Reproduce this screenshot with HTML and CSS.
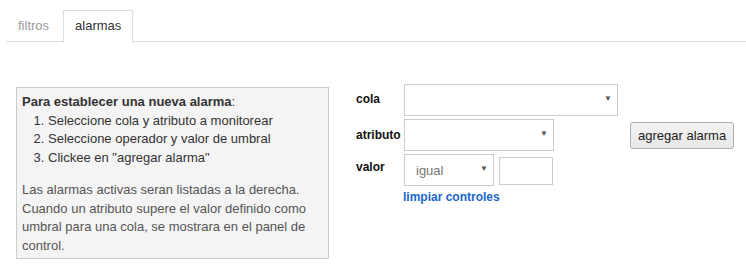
FILE: index.html
```html
<!DOCTYPE html>
<html lang="es">
<head>
    <meta charset="UTF-8">
    <title>alarmas</title>
    <link rel="stylesheet" href="styles.css">
</head>
<body>
    <div class="page">
        <ul class="tabs">
            <li class="tab">filtros</li>
            <li class="tab active">alarmas</li>
        </ul>

        <div class="content">
            <div class="help">
                <strong>Para establecer una nueva alarma</strong>:
                <ol>
                    <li>Seleccione cola y atributo a monitorear</li>
                    <li>Seleccione operador y valor de umbral</li>
                    <li>Clickee en "agregar alarma"</li>
                </ol>
                <p>Las alarmas activas seran listadas a la derecha. Cuando un atributo supere el valor definido como umbral para una cola, se mostrara en el panel de control.</p>
            </div>

            <div class="form">
                <label class="lbl lbl-cola">cola</label>
                <div class="select select-cola"><span></span><i class="arrow">▼</i></div>

                <label class="lbl lbl-attr">atributo</label>
                <div class="select select-attr"><span></span><i class="arrow">▼</i></div>
                <button class="btn">agregar alarma</button>

                <label class="lbl lbl-valor">valor</label>
                <div class="valor-row">
                    <div class="select select-op"><span>igual</span><i class="arrow">▼</i></div>
                    <input class="input" type="text">
                </div>

                <a class="link" href="#">limpiar controles</a>
            </div>
        </div>
    </div>
</body>
</html>
```

FILE: styles.css
```css
* {
    margin: 0;
    padding: 0;
    box-sizing: border-box;
}

body {
    font-family: "Liberation Sans", Arial, sans-serif;
    font-size: 13px;
    color: #333;
    background: #fff;
}

.page {
    padding: 10px 0 0 6px;
}

.tabs {
    list-style: none;
    display: flex;
    border-bottom: 1px solid #ddd;
    height: 32px;
}

.tab {
    height: 32px;
    padding: 0 11px;
    line-height: 30px;
    color: #999;
    border: 1px solid transparent;
    border-bottom: none;
    margin-right: 2px;
}

.tab.active {
    color: #333;
    background: #fff;
    border-color: #ddd;
}

.content {
    display: flex;
    align-items: flex-start;
    margin-top: 42px;
    padding-left: 10px;
}

.help {
    width: 313px;
    margin-top: 3px;
    background: #f4f4f4;
    border: 1px solid #ccc;
    padding: 5px 5px 3px 5px;
    line-height: 18.5px;
    color: #333;
}

.help strong {
    font-weight: bold;
}

.help ol {
    padding-left: 26px;
    margin-bottom: 14px;
}

.help p {
    color: #555;
}

.form {
    display: grid;
    grid-template-columns: 48px 214px auto;
    row-gap: 3px;
    margin-left: 27px;
    align-items: center;
}

.lbl {
    font-size: 12px;
    font-weight: bold;
    color: #111;
    white-space: nowrap;
    grid-column: 1;
}

.lbl-cola { grid-row: 1; }
.lbl-attr { grid-row: 2; }
.lbl-valor { grid-row: 3; }

.lbl-cola {
    align-self: start;
    padding-top: 8px;
}

.lbl-valor {
    align-self: start;
    padding-top: 6px;
}

.select {
    position: relative;
    height: 32px;
    border: 1px solid #ccc;
    background: #fff;
    display: flex;
    align-items: center;
    padding-left: 11px;
    color: #777;
}

.select-cola {
    grid-column: 2;
    grid-row: 1;
    width: 214px;
}

.select-attr {
    grid-column: 2;
    grid-row: 2;
    width: 150px;
}

.select-op {
    width: 90px;
}

.arrow {
    position: absolute;
    right: 5px;
    top: 9px;
    font-style: normal;
    font-size: 8px;
    color: #555;
}

.btn {
    grid-column: 3;
    grid-row: 2;
    margin-left: 12px;
    height: 27px;
    padding: 0 7px;
    font-family: "Liberation Sans", Arial, sans-serif;
    font-size: 13px;
    color: #222;
    background: linear-gradient(#f3f3f3, #e8e8e8);
    border: 1px solid #adadad;
    border-radius: 3px;
}

.valor-row {
    grid-column: 2;
    grid-row: 3;
    display: flex;
    align-items: center;
}

.input {
    width: 54px;
    height: 28px;
    margin-left: 5px;
    border: 1px solid #ccc;
    margin-top: 2px;
}

.link {
    grid-column: 2;
    grid-row: 4;
    font-size: 12px;
    color: #1a66cc;
    font-weight: bold;
    text-decoration: none;
    margin-left: -1px;
    margin-top: 1px;
}
```
